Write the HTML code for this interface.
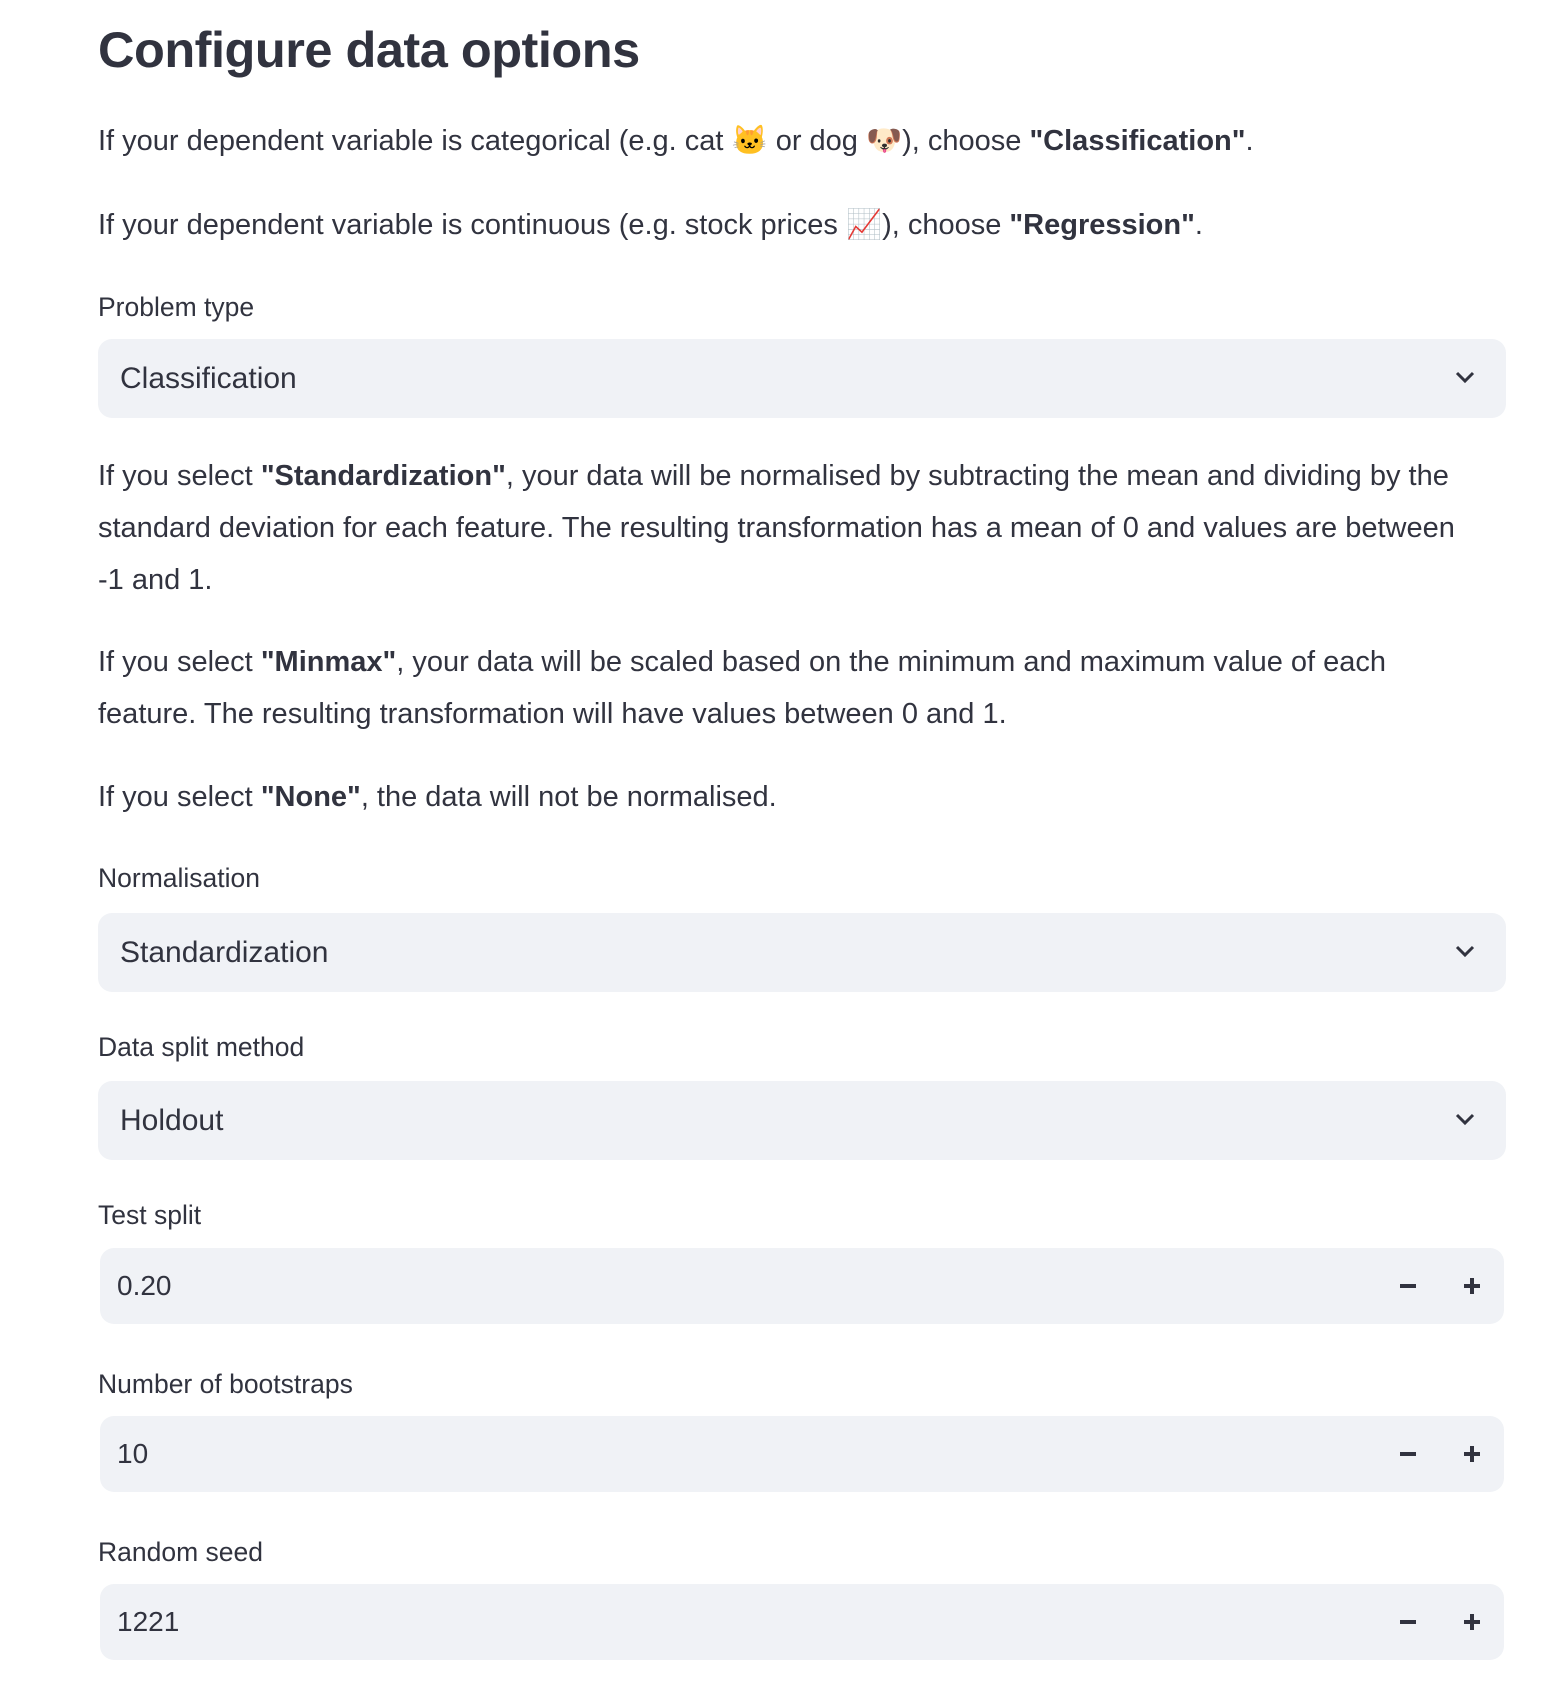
<!DOCTYPE html>
<html><head><meta charset="utf-8"><style>
body{margin:0;width:1568px;height:1690px;background:#fff;color:#31333F;font-family:"Liberation Sans","Noto Sans CJK SC",sans-serif;position:relative;overflow:hidden}
.a{position:absolute;left:98px;white-space:nowrap}
h1{margin:0;font-size:50.5px;font-weight:700;letter-spacing:-0.5px;top:20px}
.p{font-size:29px;line-height:52px}
.l{font-size:26.5px}
.box{position:absolute;left:98px;width:1408px;background:#F0F2F6;border-radius:14px}
.sel{height:79px}
.sel span{position:absolute;left:22px;top:0;line-height:79px;font-size:30px}
.sel svg{position:absolute;right:30px;top:30px}
.num{left:100px;width:1404px;height:76px}
.num span{position:absolute;left:17px;line-height:76px;font-size:28px}
.mi{position:absolute;left:1300px;top:36px;width:16px;height:4px;background:#31333F}
.pl1{position:absolute;left:1364px;top:36px;width:16px;height:4px;background:#31333F}
.pl2{position:absolute;left:1370px;top:30px;width:4px;height:16px;background:#31333F}
</style></head><body>
<h1 class="a">Configure data options</h1>
<div class="a p" style="top:115px">If your dependent variable is categorical (e.g. cat 🐱 or dog 🐶), choose <b>"Classification"</b>.</div>
<div class="a p" style="top:199px">If your dependent variable is continuous (e.g. stock prices 📈), choose <b>"Regression"</b>.</div>
<div class="a l" style="top:292px">Problem type</div>
<div class="box sel" style="top:339px"><span>Classification</span><svg width="22" height="16" viewBox="0 0 22 16"><path d="M3 4l8 8 8-8" fill="none" stroke="#31333F" stroke-width="3"/></svg></div>
<div class="a p" style="top:450px;white-space:normal;width:1385px">If you select <b>"Standardization"</b>, your data will be normalised by subtracting the mean and dividing by the standard deviation for each feature. The resulting transformation has a mean of 0 and values are between -1 and 1.</div>
<div class="a p" style="top:636px;white-space:normal;width:1385px">If you select <b>"Minmax"</b>, your data will be scaled based on the minimum and maximum value of each feature. The resulting transformation will have values between 0 and 1.</div>
<div class="a p" style="top:771px">If you select <b>"None"</b>, the data will not be normalised.</div>
<div class="a l" style="top:863px">Normalisation</div>
<div class="box sel" style="top:913px"><span>Standardization</span><svg width="22" height="16" viewBox="0 0 22 16"><path d="M3 4l8 8 8-8" fill="none" stroke="#31333F" stroke-width="3"/></svg></div>
<div class="a l" style="top:1032px">Data split method</div>
<div class="box sel" style="top:1081px"><span>Holdout</span><svg width="22" height="16" viewBox="0 0 22 16"><path d="M3 4l8 8 8-8" fill="none" stroke="#31333F" stroke-width="3"/></svg></div>
<div class="a l" style="top:1200px">Test split</div>
<div class="box num" style="top:1248px"><span>0.20</span><div class="mi"></div><div class="pl1"></div><div class="pl2"></div></div>
<div class="a l" style="top:1369px">Number of bootstraps</div>
<div class="box num" style="top:1416px"><span>10</span><div class="mi"></div><div class="pl1"></div><div class="pl2"></div></div>
<div class="a l" style="top:1537px">Random seed</div>
<div class="box num" style="top:1584px"><span>1221</span><div class="mi"></div><div class="pl1"></div><div class="pl2"></div></div>
</body></html>
